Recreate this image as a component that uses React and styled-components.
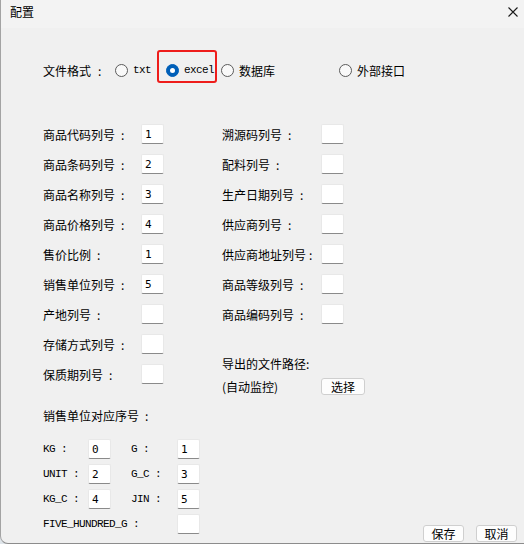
import React from "react";
import styled, { createGlobalStyle } from "styled-components";

const GlobalStyle = createGlobalStyle`
  html, body {
    margin: 0;
    padding: 0;
    background: #dfe5ea;
  }
  body {
    font-family: "Noto Sans CJK SC", "Noto Sans", sans-serif;
    font-size: 12px;
    color: #000;
  }
`;

const Window = styled.div`
  width: 524px;
  height: 544px;
  box-sizing: border-box;
  background: #f0f0f0;
  border-left: 1px solid #a3a3a3;
  border-bottom: 1px solid #8c8c8c;
  border-bottom-left-radius: 8px;
  display: flex;
  flex-direction: column;
  overflow: hidden;
`;

const TitleBar = styled.div`
  height: 28px;
  box-sizing: border-box;
  background: #f3f3f3;
  display: flex;
  justify-content: space-between;
  align-items: flex-start;
  padding: 4px 6px 0 9px;
`;

const Title = styled.span`
  line-height: 16px;
  font-size: 12px;
`;

const Close = styled.svg`
  width: 10px;
  height: 10px;
  margin-top: 3px;
`;

const Body = styled.div`
  padding: 32px 7px 0 42px;
  display: flex;
  flex-direction: column;
`;

const FormatRow = styled.div`
  display: flex;
  align-items: center;
  height: 20px;
`;

const FormatLabel = styled.span`
  width: 72px;
  white-space: nowrap;
`;

const Colon = styled.span`
  margin-left: ${({ $gap }) => $gap ?? 6}px;
`;

const Option = styled.label`
  position: relative;
  display: inline-flex;
  align-items: center;
  gap: 5px;
  width: ${({ $w }) => ($w ? `${$w}px` : "auto")};
  height: 20px;

  ${({ $marked }) =>
    $marked &&
    `
    &::after {
      content: "";
      position: absolute;
      left: -9px;
      right: 4px;
      top: -10px;
      bottom: -3px;
      border: 2px solid #ee1d1b;
      border-radius: 3px;
    }
  `}
`;

const Radio = styled.span`
  width: 13px;
  height: 13px;
  box-sizing: border-box;
  border-radius: 50%;
  flex: none;
  display: flex;
  align-items: center;
  justify-content: center;
  border: 1px solid ${({ $on }) => ($on ? "#005fb8" : "#5b5b5b")};
  background: ${({ $on }) => ($on ? "#005fb8" : "#f9f9f9")};

  &::before {
    content: "";
    width: 5px;
    height: 5px;
    border-radius: 50%;
    background: #fff;
    display: ${({ $on }) => ($on ? "block" : "none")};
  }
`;

const mono = `"Liberation Mono", "DejaVu Sans Mono", monospace`;

const OptionText = styled.span`
  font-family: ${({ $mono }) => ($mono ? mono : `"Noto Sans CJK SC", sans-serif`)};
  font-size: ${({ $mono }) => ($mono ? 11 : 12)}px;
  letter-spacing: ${({ $mono }) => ($mono ? "-0.6px" : "0")};
  white-space: nowrap;
`;

const Columns = styled.div`
  display: grid;
  grid-template-columns: 179px 1fr;
  margin-top: 44px;
`;

const Column = styled.div`
  display: flex;
  flex-direction: column;
  gap: 10px;
`;

const Field = styled.div`
  display: flex;
  align-items: center;
  height: 20px;
`;

const FieldLabel = styled.span`
  width: ${({ $w }) => $w}px;
  white-space: nowrap;
  flex: none;
`;

const Box = styled.input`
  width: 23px;
  height: 20px;
  box-sizing: border-box;
  margin: 0;
  padding: 0 0 0 3px;
  background: #fff;
  border: 1px solid #e8e8e8;
  border-bottom-color: #8a8a8a;
  border-radius: 2px;
  font-family: "DejaVu Sans Mono", monospace;
  font-size: 11px;
  color: #000;
  outline: none;
`;

const PathBlock = styled.div`
  margin-top: 22px;
  display: flex;
  flex-direction: column;
  gap: 6px;
`;

const PathTitle = styled.span`
  line-height: 16px;
`;

const PathRow = styled.div`
  display: flex;
  align-items: center;
  height: 17px;
`;

const Button = styled.button`
  width: ${({ $w }) => $w ?? 41}px;
  height: 17px;
  box-sizing: border-box;
  padding: 0;
  margin: 0;
  background: #fdfdfd;
  border: 1px solid #cfcfcf;
  border-radius: 3px;
  font-family: "Noto Sans CJK SC", sans-serif;
  font-size: 12px;
  line-height: 15px;
  color: #000;
`;

const BottomRow = styled.div`
  display: flex;
  justify-content: space-between;
  align-items: flex-end;
  margin-top: 13px;
`;

const UnitSection = styled.div`
  padding-bottom: 8px;
`;

const UnitTitle = styled.div`
  line-height: 16px;
`;

const UnitGrid = styled.div`
  margin-top: 15px;
  display: grid;
  grid-template-columns: 45px 43px 46px 23px;
  grid-auto-rows: 20px;
  row-gap: 5px;
  align-items: center;
`;

const UnitLabel = styled.span`
  font-family: ${mono};
  font-size: 11px;
  letter-spacing: -0.6px;
  white-space: pre;
  grid-column: ${({ $span }) => ($span ? `span ${$span}` : "auto")};
`;

const Footer = styled.div`
  display: flex;
  gap: 12px;
`;

const leftFields = [
  ["商品代码列号", "1"],
  ["商品条码列号", "2"],
  ["商品名称列号", "3"],
  ["商品价格列号", "4"],
  ["售价比例", "1"],
  ["销售单位列号", "5"],
  ["产地列号", ""],
  ["存储方式列号", ""],
  ["保质期列号", ""],
];

const rightFields = [
  "溯源码列号",
  "配料列号",
  "生产日期列号",
  "供应商列号",
  "供应商地址列号",
  "商品等级列号",
  "商品编码列号",
];

const units = [
  ["KG :", "0", "G :", "1"],
  ["UNIT :", "2", "G_C :", "3"],
  ["KG_C :", "4", "JIN :", "5"],
];

export default function App() {
  return (
    <>
      <GlobalStyle />
      <Window>
        <TitleBar>
          <Title>配置</Title>
          <Close viewBox="0 0 10 10">
            <path d="M0.5 0.5 L9.5 9.5 M9.5 0.5 L0.5 9.5" stroke="#1a1a1a" strokeWidth="1.1" fill="none" />
          </Close>
        </TitleBar>

        <Body>
          <FormatRow>
            <FormatLabel>
              文件格式<Colon $gap={7}>:</Colon>
            </FormatLabel>
            <Option $w={51}>
              <Radio />
              <OptionText $mono>txt</OptionText>
            </Option>
            <Option $w={55} $marked>
              <Radio $on />
              <OptionText $mono>excel</OptionText>
            </Option>
            <Option $w={118}>
              <Radio />
              <OptionText>数据库</OptionText>
            </Option>
            <Option>
              <Radio />
              <OptionText>外部接口</OptionText>
            </Option>
          </FormatRow>

          <Columns>
            <Column>
              {leftFields.map(([label, value]) => (
                <Field key={label}>
                  <FieldLabel $w={98}>
                    {label}
                    <Colon>:</Colon>
                  </FieldLabel>
                  <Box readOnly value={value} />
                </Field>
              ))}
            </Column>
            <Column>
              {rightFields.map((label) => (
                <Field key={label}>
                  <FieldLabel $w={99}>
                    {label}
                    <Colon $gap={label.length > 6 ? 3 : 6}>:</Colon>
                  </FieldLabel>
                  <Box readOnly value="" />
                </Field>
              ))}
              <PathBlock>
                <PathTitle>导出的文件路径:</PathTitle>
                <PathRow>
                  <FieldLabel $w={99}>(自动监控)</FieldLabel>
                  <Button $w={44}>选择</Button>
                </PathRow>
              </PathBlock>
            </Column>
          </Columns>

          <BottomRow>
            <UnitSection>
              <UnitTitle>
                销售单位对应序号<Colon>:</Colon>
              </UnitTitle>
              <UnitGrid>
                {units.map(([a, av, b, bv]) => (
                  <React.Fragment key={a}>
                    <UnitLabel>{a}</UnitLabel>
                    <div>
                      <Box readOnly value={av} />
                    </div>
                    <UnitLabel>{b}</UnitLabel>
                    <Box readOnly value={bv} />
                  </React.Fragment>
                ))}
                <UnitLabel $span={3}>FIVE_HUNDRED_G :</UnitLabel>
                <Box readOnly value="" />
              </UnitGrid>
            </UnitSection>
            <Footer>
              <Button>保存</Button>
              <Button>取消</Button>
            </Footer>
          </BottomRow>
        </Body>
      </Window>
    </>
  );
}
